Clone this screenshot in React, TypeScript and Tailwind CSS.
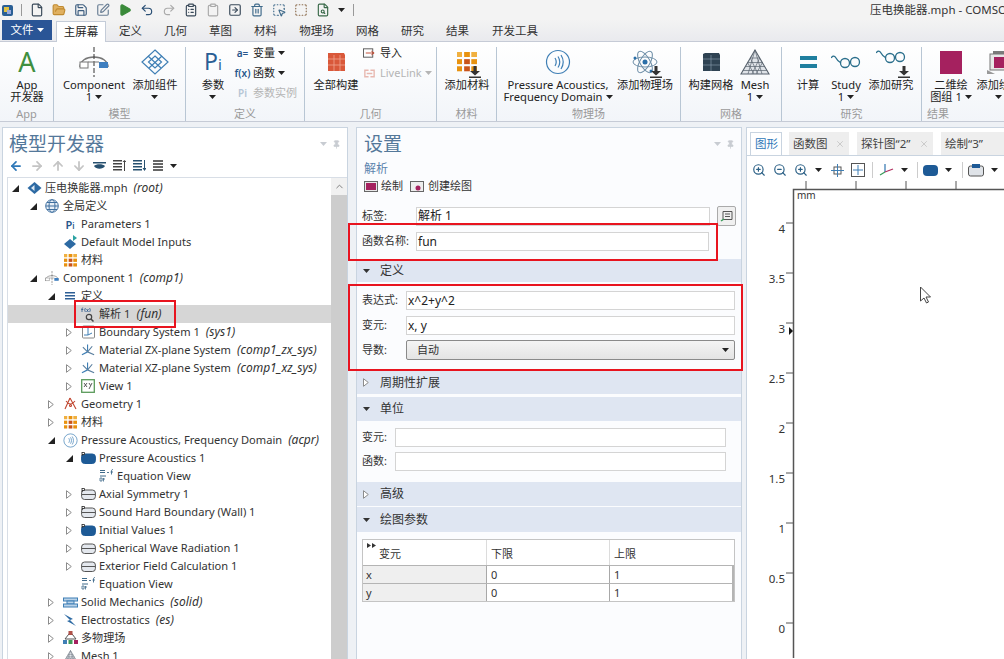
import React from "react";
import { File, FolderOpen, Save, SquarePen, Play, Undo2, Redo2, ClipboardList, Clipboard, SquareArrowRight, Trash2, SquareDashedMousePointer, SquareDashed, FileSearch, ChevronUp, ArrowLeft, ArrowRight, ArrowUp, ArrowDown, ZoomIn, ZoomOut, Pin, X } from "lucide-react";

const Caret = ({ c = "#222" }: { c?: string }) => (
  <svg width="7" height="4" viewBox="0 0 7 4" className="inline-block shrink-0"><path d="M0 0h7L3.5 4z" fill={c} /></svg>
);

const AcousticIcon = ({ s = 26 }: { s?: number }) => (
  <svg width={s} height={s} viewBox="0 0 26 26" fill="none" stroke="#3f7fb5">
    <circle cx="13" cy="13" r="11.5" strokeWidth="1.2" />
    <path d="M10 9c1.6 2.6 1.6 5.4 0 8M13 7.5c2.2 3.4 2.2 7.6 0 11M16 6c2.8 4.4 2.8 9.600 0 14" strokeWidth="1.2" />
  </svg>
);
const MaterialIcon = ({ s = 14 }: { s?: number }) => (
  <svg width={s} height={s} viewBox="0 0 14 14">
    <g fill="#e8920f">
      <rect x="5" y="0" width="4" height="3.500" />
      <rect x="0" y="5" width="3.500" height="3.500" />
      <rect x="5" y="5" width="4" height="3.500" fill="#c9541a" />
      <rect x="10" y="5" width="4" height="3.500" />
      <rect x="0" y="10" width="3.500" height="3.500" />
      <rect x="5" y="10" width="4" height="3.500" fill="#c9541a" />
      <rect x="10" y="10" width="4" height="3.500" />
      <rect x="10" y="0" width="4" height="3.500" fill="#f0b040" />
      <rect x="0" y="0" width="3.500" height="3.500" fill="#f0b040" />
    </g>
  </svg>
);
const DownArrow = () => (
  <svg width="12" height="12" viewBox="0 0 12 12" className="absolute -bottom-[1px] -right-[4px]"><path d="M4.500 0h3v5H11L6 9.500 1 5h3.500zM0 10.500h12V12H0z" fill="#333" /></svg>
);
const ComponentIcon = ({ s = 30 }: { s?: number }) => (
  <svg width={s} height={s} viewBox="0 0 30 30" fill="none">
    <path d="M1 20c0-6 6-10 14-10s14 4 14 10" stroke="#777" strokeWidth="1.500" />
    <rect x="20" y="15" width="9" height="6" fill="#3f7fc0" />
    <rect x="1" y="15" width="8" height="6" fill="#fff" stroke="#777" />
    <path d="M15 0v30" stroke="#333" strokeWidth="1" strokeDasharray="5 2" />
    <path d="M9 15h11" stroke="#777" />
  </svg>
);
const AddCompIcon = () => (
  <svg width="28" height="26" viewBox="0 0 28 26" fill="none" stroke="#3f7fb5" strokeWidth="1.200">
    <path d="M14 1l13 12-13 12L1 13z" />
    <path d="M7 7l13 12M21 7L8 19M14 7l6.500 6-6.500 6-6.500-6z" />
  </svg>
);
const RedCube = () => (
  <svg width="20" height="20" viewBox="0 0 20 20"><path d="M2 1h16l1 2v16H2z" fill="#d9583a" /><path d="M2 7h17M2 13h17M8 3v16M14 3v16" stroke="#f1a58f" strokeWidth=".8" /></svg>
);
const DarkCube = () => (
  <svg width="20" height="20" viewBox="0 0 20 20"><path d="M2 2l2-1h14l1 2v16H2z" fill="#2f4353" /><path d="M2 7h17M2 13h17M10 3v16" stroke="#8fa3b3" strokeWidth=".6" /></svg>
);
const MeshIcon = () => (
  <svg width="30" height="26" viewBox="0 0 30 26" fill="#dfe3e8" stroke="#59636e" strokeWidth=".7">
    <path d="M15 1l14 24H1z" strokeWidth="1.100" />
    <path d="M10.300 9h9.400M7.500 13.500h15M5 17.500h20M2.800 21.500h24.400M15 1L8 25M15 1l7 24M10.300 9L18 25M19.700 9L12 25M7.500 13.500L14 25M22.500 13.500L16 25" />
  </svg>
);
const StudyIcon = ({ s = 1 }: { s?: number }) => (
  <svg width={30 * s} height={16 * s} viewBox="0 0 30 16" fill="none" stroke="#2b6f8c" strokeWidth="1.300">
    <path d="M0 4c2-3 4-2 5 0s3 4 5 5" />
    <circle cx="14" cy="9" r="4.500" />
    <circle cx="24" cy="8" r="4.500" />
    <path d="M18.500 8.500c1-.8 1-.8 1.500-.8" />
  </svg>
);
const AtomIcon = () => (
  <svg width="26" height="26" viewBox="0 0 26 26" fill="none" stroke="#6f8fa8" strokeWidth="1">
    <ellipse cx="13" cy="13" rx="12" ry="5" />
    <ellipse cx="13" cy="13" rx="12" ry="5" transform="rotate(60 13 13)" />
    <ellipse cx="13" cy="13" rx="12" ry="5" transform="rotate(120 13 13)" />
    <circle cx="13" cy="13" r="2.500" fill="#2b6fa8" stroke="none" />
    <circle cx="3" cy="9" r="1.500" fill="#2b6fa8" stroke="none" />
    <circle cx="19" cy="22" r="1.500" fill="#2b6fa8" stroke="none" />
  </svg>
);
const PlotGroupIcon = () => <div className="h-[23px] w-[22px] bg-[#a5215f]" />;
const AddPlotIcon = () => (
  <svg width="24" height="24" viewBox="0 0 24 24"><rect x="6" y="1" width="17" height="16" fill="#7b7b7b" /><rect x="3" y="4" width="17" height="16" fill="#e8e8e8" stroke="#777" /><rect x="7" y="7" width="11" height="11" fill="#a5215f" /><path d="M0 20l8 4H0z" fill="#999" /></svg>
);
const PiIcon = ({ big }: { big?: boolean }) =>
  big ? <span className="text-[23px] leading-[26px] text-[#2a5f95]">P<span className="text-[15px]">i</span></span> : <span className="text-[11px] font-semibold leading-none text-[#27568c]">P<span className="text-[8px]">i</span></span>;

const RibbonBtn = ({ w, icon, lines, caret, arrow, ml = 0 }: { w: number; icon: React.ReactNode; lines: string[]; caret?: boolean; arrow?: boolean; ml?: number }) => (
  <div className="flex shrink-0 flex-col items-center" style={{ width: w, marginLeft: ml }}>
    <div className="relative flex h-[30px] items-center justify-center">{icon}{arrow && <DownArrow />}</div>
    <div className="mt-[2px] whitespace-nowrap text-center text-[11.200px] leading-[12px] text-[#222]">
      {lines.map((l, i) => (
        <div key={i} className="flex h-[12px] items-center justify-center gap-[3px]">
          {l}
          {caret && i === lines.length - 1 && <Caret />}
        </div>
      ))}
    </div>
  </div>
);

const Group = ({ w, label, children }: { w: number; label: string; children: React.ReactNode }) => (
  <div className="flex shrink-0 flex-col border-r border-[#b8c6d4]" style={{ width: w }}>
    <div className="flex h-[61px] items-start">{children}</div>
    <div className="text-center text-[11px] leading-[14px] text-[#9a9a9a]">{label}</div>
  </div>
);

const SmallRow = ({ icon, text, gray, caret }: { icon: React.ReactNode; text: string; gray?: boolean; caret?: boolean }) => (
  <div className={`flex h-[20px] items-center gap-[4px] whitespace-nowrap text-[11px] ${gray ? "text-[#b5b5b5]" : "text-[#222]"}`}>
    <span className="flex w-[13px] justify-center">{icon}</span>
    <span className="flex items-center gap-[3px]">{text}{caret && <Caret c={gray ? "#b5b5b5" : "#222"} />}</span>
  </div>
);

const PanelHead = ({ title }: { title: string }) => (
  <div className="flex h-[29px] items-center justify-between pr-[6px] pt-[3px]">
    <span className="text-[19px] leading-[24px] text-[#54789a]">{title}</span>
    <span className="flex items-center gap-[5px]">
      <Caret c="#c8ccd2" />
      <Pin size={9} color="#c8ccd2" fill="#c8ccd2" />
    </span>
  </div>
);

const TreeTri = ({ open }: { open?: boolean }) =>
  open ? (
    <svg width="7" height="7" viewBox="0 0 7 7"><path d="M7 0v7H0z" fill="#222" /></svg>
  ) : (
    <svg width="6" height="9" viewBox="0 0 6 9"><path d="M.5.700L5.300 4.500.5 8.300z" fill="#fff" stroke="#8c8c8c" /></svg>
  );

const DomainIcon = ({ kind }: { kind: "solidP" | "lineP" | "line" }) => (
  <svg width="15" height="12" viewBox="0 0 15 12" fill="none">
    <rect x=".6" y="2" width="13.800" height="9.500" rx="3" fill={kind === "solidP" ? "#1d5a96" : "#e4e8ee"} stroke={kind === "solidP" ? "#1d5a96" : "#555"} />
    {kind !== "solidP" && <path d="M1 6.500h13" stroke="#555" />}
    {kind !== "line" && <path d="M1 0v4M1 .5h2.500v2H1" stroke="#222" strokeWidth=".8" fill="#fff" />}
  </svg>
);
const EqIcon = () => (
  <svg width="15" height="14" viewBox="0 0 15 14" fill="none" stroke="#3f6a8a" strokeWidth="1">
    <path d="M1 1.500h5M1 3.500h5M1 7h6" />
    <path d="M1 9h2v3H1zM4.500 9v3.500M3.500 10h2.500" strokeWidth=".8" />
    <path d="M8 3.500h2M12.500 5.500V2c0-1 .5-1.500 1.500-1.500M11.500 3h2.500" strokeWidth=".9" />
  </svg>
);
const SearchFx = () => (
  <svg width="15" height="15" viewBox="0 0 15 15" fill="none"><path d="M1 5V2c0-1 .5-1.200 1.200-1.200M.3 2.500h2M4.500 1c-1 1.200-1 3 0 4M5.500 2l2 3M7.500 2l-2 3M8.500 1c1 1.200 1 3 0 4" stroke="#27568c" strokeWidth=".8" /><circle cx="8" cy="10" r="2.700" stroke="#444" strokeWidth="1.200" /><path d="M10 12l2.500 2.500" stroke="#444" strokeWidth="1.500" /></svg>
);
const AxesIcon = () => (
  <svg width="16" height="14" viewBox="0 0 16 14" fill="none" strokeWidth="1.200"><path d="M7 1v8" stroke="#3f7fb5" /><path d="M7 9l-6 3" stroke="#3f7fb5" /><path d="M7 9l7 3M7 9l5-6M7 9L2 4" stroke="#5a7f9f" /></svg>
);

type Row = { l: number; open?: boolean; leaf?: boolean; icon: React.ReactNode; t: string; i?: string; sel?: boolean };
const rows: Row[] = [
  { l: 0, open: true, icon: <svg width="15" height="12" viewBox="0 0 15 12"><path d="M7.500 0l7 6-7 6-7-6z" fill="#2d6aa3" /><path d="M7.500 3L4 6l3.500 3" fill="#dce8f2" /></svg>, t: "压电换能器.mph", i: "(root)" },
  { l: 1, open: true, icon: <svg width="14" height="14" viewBox="0 0 14 14" fill="#e6eef6" stroke="#3f6f9f"><circle cx="7" cy="7" r="6.300" /><ellipse cx="7" cy="7" rx="3" ry="6.300" /><path d="M1 7h12M2 3.500h10M2 10.500h10" /></svg>, t: "全局定义" },
  { l: 2, leaf: true, icon: <PiIcon />, t: "Parameters 1" },
  { l: 2, leaf: true, icon: <svg width="15" height="14" viewBox="0 0 15 14"><path d="M1 9l6-5 6 5-6 5z" fill="#2d6aa3" /><path d="M10 0v6l4-3z" fill="#2ba3a3" /></svg>, t: "Default Model Inputs" },
  { l: 2, leaf: true, icon: <MaterialIcon s={13} />, t: "材料" },
  { l: 1, open: true, icon: <ComponentIcon s={14} />, t: "Component 1", i: "(comp1)" },
  { l: 2, open: true, icon: <svg width="10" height="8" viewBox="0 0 10 8" fill="#2d5f95"><rect width="10" height="1.500" /><rect y="3" width="10" height="1.500" /><rect y="6" width="10" height="1.500" /></svg>, t: "定义" },
  { l: 3, leaf: true, icon: <SearchFx />, t: "解析 1", i: "(fun)", sel: true },
  { l: 3, icon: <svg width="13" height="14" viewBox="0 0 13 14" fill="none"><rect x=".5" y="1" width="12" height="12" rx="1" stroke="#888" /><path d="M6 3v7H2M6 10l4-2" stroke="#3f7fb5" /></svg>, t: "Boundary System 1", i: "(sys1)" },
  { l: 3, icon: <AxesIcon />, t: "Material ZX-plane System", i: "(comp1_zx_sys)" },
  { l: 3, icon: <AxesIcon />, t: "Material XZ-plane System", i: "(comp1_xz_sys)" },
  { l: 3, icon: <svg width="14" height="14" viewBox="0 0 14 14" fill="none"><rect x=".7" y=".7" width="12.600" height="12.600" fill="#fff" stroke="#5a9a5a" strokeWidth="1.300" /><path d="M3 4l3 4M6 4L3 8M8 4l1.500 2.500M11 4L8 10" stroke="#333" strokeWidth=".8" /></svg>, t: "View 1" },
  { l: 2, icon: <svg width="15" height="15" viewBox="0 0 15 15" fill="none" stroke="#c0452f" strokeWidth="1.100"><path d="M7 1L2 12M7 1l6 11M3 4c3 4 6 4 9 0" /><circle cx="7.500" cy="8.500" r="1" /></svg>, t: "Geometry 1" },
  { l: 2, icon: <MaterialIcon s={13} />, t: "材料" },
  { l: 2, open: true, icon: <AcousticIcon s={15} />, t: "Pressure Acoustics, Frequency Domain", i: "(acpr)" },
  { l: 3, open: true, icon: <DomainIcon kind="solidP" />, t: "Pressure Acoustics 1" },
  { l: 4, leaf: true, icon: <EqIcon />, t: "Equation View" },
  { l: 3, icon: <DomainIcon kind="lineP" />, t: "Axial Symmetry 1" },
  { l: 3, icon: <DomainIcon kind="lineP" />, t: "Sound Hard Boundary (Wall) 1" },
  { l: 3, icon: <DomainIcon kind="solidP" />, t: "Initial Values 1" },
  { l: 3, icon: <DomainIcon kind="line" />, t: "Spherical Wave Radiation 1" },
  { l: 3, icon: <DomainIcon kind="line" />, t: "Exterior Field Calculation 1" },
  { l: 3, leaf: true, icon: <EqIcon />, t: "Equation View" },
  { l: 2, icon: <svg width="15" height="13" viewBox="0 0 15 13" fill="#b9d2e8" stroke="#3f7fb5"><rect x=".5" y="2" width="14" height="3" /><rect x="4" y="5" width="7" height="3" /><rect x=".5" y="8" width="14" height="3" /></svg>, t: "Solid Mechanics", i: "(solid)" },
  { l: 2, icon: <svg width="14" height="14" viewBox="0 0 14 14" fill="#2d6aa3"><path d="M1 1l9 5-3 1 6 6-9-5 3-1z" /></svg>, t: "Electrostatics", i: "(es)" },
  { l: 2, icon: <svg width="15" height="14" viewBox="0 0 15 14"><path d="M7.500 1L2 8h11z" fill="none" stroke="#555" /><rect x="5.500" y="0" width="4" height="4" fill="#b0524a" /><rect x="0" y="9" width="4" height="4" fill="#3f7fb5" /><rect x="5.500" y="9" width="4" height="4" fill="#3f9a5a" /><rect x="11" y="9" width="4" height="4" fill="#a5215f" /></svg>, t: "多物理场" },
  { l: 2, icon: <MeshIcon />, t: "Mesh 1" },
];

const TreeRow = ({ r }: { r: Row }) => (
  <div className={`flex h-[18px] shrink-0 items-center whitespace-nowrap text-[11.100px] text-[#333] ${r.sel ? "bg-[#d6d6d6]" : ""}`}>
    <span className="shrink-0" style={{ width: 18 * r.l + 2 }} />
    <span className="flex w-[10px] shrink-0 justify-center">{!r.leaf && <TreeTri open={r.open} />}</span>
    <span className="flex h-[16px] w-[23px] shrink-0 items-center justify-center overflow-hidden pl-[5px] [&>svg]:max-h-[15px] [&>svg]:max-w-[15px]">{r.icon}</span>
    <span className="ml-[2px]">{r.t}</span>
    {r.i && <span className="ml-[6px] text-[12px] italic">{r.i}</span>}
  </div>
);

const Section = ({ t, open, h = 24 }: { t: string; open?: boolean; h?: number }) => (
  <div className="mb-[1px] flex items-center bg-[#dfe6f2] pl-[6px] text-[12px] text-[#333]" style={{ height: h }}>
    <span className="flex w-[17px] items-center">{open ? <Caret c="#333" /> : <TreeTri />}</span>
    {t}
  </div>
);

const Field = ({ label, lw, value, right = 6, mb = 6 }: { label: string; lw: number; value?: string; right?: number; mb?: number }) => (
  <div className="flex items-center pl-[5px] text-[11px] text-[#333]" style={{ paddingRight: right, marginBottom: mb }}>
    <span className="shrink-0 whitespace-nowrap" style={{ width: lw }}>{label}</span>
    <div className="flex h-[19px] flex-1 items-center border border-[#d4d4d4] bg-white pl-[1px] text-[12px] text-[#222]">{value}</div>
  </div>
);

const PlotTable = () => {
  const cols = "grid grid-cols-[124px_123px_1fr]";
  return (
    <div className="ml-[5px] mr-[6px] border border-[#c4c4c4] text-[11px] text-[#333]">
      <div className={`${cols} h-[25px] bg-white`}>
        <div className="relative border-r border-[#dcdcdc] pl-[16px] pt-[6px]"><svg width="9" height="5" viewBox="0 0 9 5" className="absolute left-[4px] top-[3px]"><path d="M0 0l4 2.500L0 5zM5 0l4 2.500L5 5z" fill="#333" /></svg>变元</div>
        <div className="border-r border-[#dcdcdc] pl-[4px] pt-[6px]">下限</div>
        <div className="pl-[4px] pt-[6px]">上限</div>
      </div>
      {[["x", "0", "1"], ["y", "0", "1"]].map((r) => (
        <div key={r[0]} className={`${cols} h-[18px] border-t border-[#b4b4b4] leading-[17px]`}>
          <div className="border-r border-[#a8a8a8] bg-[#efefef] pl-[3px]">{r[0]}</div>
          <div className="border-r border-[#a8a8a8] bg-white pl-[4px]">{r[1]}</div>
          <div className="border-r-2 border-[#b4b4b4] bg-white pl-[4px]">{r[2]}</div>
        </div>
      ))}
    </div>
  );
};

const Tab = ({ t, w, active }: { t: string; w: number; active?: boolean }) => (
  <div className={`flex h-[23px] shrink-0 items-center justify-between whitespace-nowrap px-[4px] text-[11.500px] ${active ? "mr-[7px] border border-b-0 border-[#c9d4e0] bg-white text-[#2f78b8]" : "mr-[8px] bg-[#eeeeee] text-[#444]"}`} style={{ width: w }}>
    {t}
    {!active && <X size={10} color="#c4c4c4" />}
  </div>
);

const Plot = () => {
  const yl = [["4", 224], ["3.5", 274], ["3", 324], ["2.5", 374], ["2", 424], ["1.5", 474], ["1", 524], ["0.5", 574], ["0", 624]] as [string, number][];
  return (
    <svg width="258" height="477" viewBox="746 182 258 477" className="block" fontFamily="Noto Sans, sans-serif" fontSize="11.500">
      <path d="M792.500 659V190.500H1004" fill="none" stroke="#555" strokeWidth="1.500" />
      {[805, 855, 905, 955].map((x) => <line key={x} x1={x} x2={x} y1="182" y2="190" stroke="#555" />)}
      <text x="796" y="200" fontSize="10" fill="#333">mm</text>
      {yl.map(([t, y]) => (
        <g key={t}>
          <line x1="785" x2="792" y1={y} y2={y} stroke="#555" />
          <text x="784" y={y + 10} textAnchor="end" fill="#333">{t}</text>
        </g>
      ))}
      <path d="M788 328l4 4-4 4z" fill="#111" />
      <path d="M919.500 288v14l3.500-3 2.500 5 2-1-2.500-5h4.500z" fill="#fff" stroke="#444" />
    </svg>
  );
};

const tabs: [string, number][] = [["定义", 45], ["几何", 45], ["草图", 45], ["材料", 45], ["物理场", 57], ["网格", 45], ["研究", 45], ["结果", 45], ["开发工具", 70]];

export default function App() {
  const iconC = "#3a4a5a";
  return (
    <div className="relative flex h-[659px] w-[1004px] flex-col overflow-hidden bg-[#eef1f5] font-['Noto_Sans','Noto_Sans_CJK_SC',sans-serif]">
      {/* Title bar */}
      <div className="flex h-[20px] shrink-0 items-center bg-[#f3f3f3]">
        <div className="flex w-[870px] shrink-0 items-center gap-[8px] pl-[2px]">
          <svg width="11" height="11" viewBox="0 0 11 11"><rect width="11" height="11" rx="2" fill="#2a5f95" /><rect x="2" y="2" width="5" height="5" fill="#e0c040" /><rect x="5" y="5" width="4" height="4" fill="#9ad" /></svg>
          <span className="h-[12px] w-px bg-[#999]" />
          <File size={14} color={iconC} />
          <FolderOpen size={14} color="#c08a30" fill="#e0b060" />
          <Save size={14} color="#3f5f80" />
          <SquarePen size={14} color="#6a7f95" />
          <Play size={14} color="#3a8a3a" fill="#3a8a3a" />
          <Undo2 size={14} color="#2a4f75" />
          <Redo2 size={14} color="#aaaaaa" />
          <ClipboardList size={14} color={iconC} />
          <Clipboard size={14} color="#aaaaaa" />
          <SquareArrowRight size={14} color={iconC} />
          <Trash2 size={14} color="#3f6a8a" />
          <SquareDashedMousePointer size={14} color="#3f6a8a" />
          <SquareDashed size={14} color="#8a6a4a" />
          <FileSearch size={14} color="#3a6a4a" />
          <Caret />
          <span className="h-[12px] w-px bg-[#999]" />
        </div>
        <span className="whitespace-nowrap text-[11.500px] text-[#333]">压电换能器.mph - COMSOL Multiphysics</span>
      </div>

      {/* Tabs */}
      <div className="flex h-[21px] shrink-0 items-end bg-gradient-to-b from-[#f3f3f3] to-[#e9eaee] pl-[2px]">
        <div className="mb-[1px] flex h-[20px] w-[50px] items-center justify-center gap-[3px] bg-[#2a5596] text-[11.500px] text-white">文件<Caret c="#fff" /></div>
        <div className="z-10 ml-[4px] -mb-[1px] flex h-[21px] w-[50px] items-center justify-center border border-b-0 border-[#c4ccd8] bg-white text-[11.500px] text-[#222]">主屏幕</div>
        <div className="ml-[2px] flex">
          {tabs.map(([t, w]) => (
            <div key={t} className="flex h-[20px] items-center justify-center text-[11.500px] text-[#333]" style={{ width: w }}>{t}</div>
          ))}
        </div>
      </div>

      {/* Ribbon */}
      <div className="flex h-[81px] shrink-0 overflow-hidden border-y border-[#c6cbd6] bg-gradient-to-b from-white to-[#f2f5f9] pt-[5px]">
        <Group w={54} label="App">
          <RibbonBtn w={54} icon={<span className="text-[27px] leading-[28px] text-[#3f8f3f]">A</span>} lines={["App", "开发器"]} />
        </Group>
        <Group w={132} label="模型">
          <RibbonBtn w={70} ml={5} icon={<ComponentIcon />} lines={["Component", "1"]} caret />
          <RibbonBtn w={54} ml={-1} icon={<AddCompIcon />} lines={["添加组件", " "]} caret />
        </Group>
        <Group w={119} label="定义">
          <RibbonBtn w={36} ml={9} icon={<PiIcon big />} lines={["参数", " "]} caret />
          <div className="-mt-[4px] ml-[5px] flex flex-col">
            <SmallRow icon={<span className="text-[10px] font-semibold text-[#27568c]">a=</span>} text="变量" caret />
            <SmallRow icon={<span className="text-[10px] font-semibold text-[#27568c]">f(x)</span>} text="函数" caret />
            <SmallRow icon={<span className="text-[10px] font-semibold text-[#b5c5d5]">Pi</span>} text="参数实例" gray />
          </div>
        </Group>
        <Group w={132} label="几何">
          <RibbonBtn w={48} ml={7} icon={<RedCube />} lines={["全部构建"]} />
          <div className="-mt-[4px] ml-[3px] flex flex-col">
            <SmallRow icon={<svg width="14" height="12" viewBox="0 0 14 12" fill="none" stroke="#555"><rect x=".5" y="1.500" width="10" height="9" /><path d="M3 6h8M9 4l3 2-3 2" stroke="#c0452f" /></svg>} text="导入" />
            <SmallRow icon={<svg width="14" height="11" viewBox="0 0 14 11" fill="none" stroke="#e8b8b0" strokeWidth="1.500"><path d="M6 2H2v7h4M8 2h4v7H8M4 5.500h6" /></svg>} text="LiveLink" gray caret />
          </div>
        </Group>
        <Group w={60} label="材料">
          <RibbonBtn w={58} ml={1} icon={<MaterialIcon s={20} />} lines={["添加材料"]} arrow />
        </Group>
        <Group w={184} label="物理场">
          <RibbonBtn w={106} ml={8} icon={<AcousticIcon />} lines={["Pressure Acoustics,", "Frequency Domain"]} caret />
          <RibbonBtn w={60} ml={4} icon={<AtomIcon />} lines={["添加物理场"]} arrow />
        </Group>
        <Group w={101} label="网格">
          <RibbonBtn w={50} ml={5} icon={<DarkCube />} lines={["构建网格"]} />
          <RibbonBtn w={38} icon={<MeshIcon />} lines={["Mesh", "1"]} caret />
        </Group>
        <Group w={140} label="研究">
          <RibbonBtn w={30} ml={11} icon={<svg width="17" height="12" viewBox="0 0 17 12" fill="#1f7f9f"><rect width="17" height="4" /><rect y="8" width="17" height="4" /></svg>} lines={["计算"]} />
          <RibbonBtn w={34} ml={6} icon={<StudyIcon />} lines={["Study", "1"]} caret />
          <RibbonBtn w={50} ml={3} icon={<div className="-mt-[10px]"><StudyIcon /></div>} lines={["添加研究"]} arrow />
        </Group>
        <div className="flex min-w-0 flex-1 flex-col">
          <div className="flex h-[61px]">
            <RibbonBtn w={48} ml={5} icon={<PlotGroupIcon />} lines={["二维绘", "图组 1"]} caret />
            <RibbonBtn w={48} ml={0} icon={<AddPlotIcon />} lines={["添加绘图", " "]} caret />
          </div>
          <div className="pr-[50px] text-center text-[11px] leading-[14px] text-[#9a9a9a]">结果</div>
        </div>
      </div>

      {/* Main panels */}
      <div className="flex min-h-0 flex-1 pt-[5px] pl-[2px]">
        {/* Model builder */}
        <div className="flex w-[346px] shrink-0 flex-col overflow-hidden border border-b-0 border-[#c9d4e0] bg-white">
          <div className="pl-[6px]"><PanelHead title="模型开发器" /></div>
          <div className="flex h-[20px] shrink-0 items-center gap-[7px] bg-white pb-[3px] pl-[6px]">
            <ArrowLeft size={14} color="#2f78b8" strokeWidth={3} />
            <ArrowRight size={14} color="#c4c4c4" strokeWidth={3} />
            <ArrowUp size={14} color="#c4c4c4" strokeWidth={3} />
            <ArrowDown size={14} color="#c4c4c4" strokeWidth={3} />
            <svg width="13" height="9" viewBox="0 0 13 9"><path d="M0 1h13v1.500H0zM1 5c2-2.500 9-2.500 11 0-2 3.500-9 3.500-11 0z" fill="#27506f" /></svg>
            <svg width="13" height="11" viewBox="0 0 13 11" fill="#444"><path d="M0 0h9v1.500H0zM0 3h9v1.500H0zM0 6h9v1.500H0zM0 9h9v1.500H0zM11 2v9h1V2h1.500L11.500 0 9.500 2z" /></svg>
            <svg width="13" height="11" viewBox="0 0 13 11" fill="#27506f"><path d="M0 0h9v1.500H0zM0 3h9v1.500H0zM0 6h9v1.500H0zM0 9h9v1.500H0zM11 0v8h-1.500l2 3 2-3H12V0z" /></svg>
            <svg width="10" height="11" viewBox="0 0 10 11" fill="#666"><path d="M0 0h10v2H0zM0 3h10v2H0zM0 6h10v2H0zM0 9h10v2H0z" /></svg>
            <Caret />
          </div>
          <div className="flex min-h-0 flex-1 pl-[4px]">
            <div className="flex min-w-0 flex-1 flex-col overflow-hidden border-l border-t border-[#d8dee6] pt-[1px]">
              {rows.map((r, i) => <TreeRow key={i} r={r} />)}
            </div>
            <div className="w-[16px] shrink-0 border-t border-[#d8dee6] bg-[#cdcdcd]">
              <div className="flex h-[17px] items-center justify-center bg-[#f1f1f1]"><ChevronUp size={11} color="#777" /></div>
            </div>
          </div>
        </div>

        {/* Settings */}
        <div className="ml-[8px] flex w-[386px] shrink-0 flex-col overflow-hidden border border-b-0 border-[#c9d4e0] bg-[#fbfcfe]">
          <div className="pl-[7px]"><PanelHead title="设置" /></div>
          <div className="mt-[4px] pl-[7px] text-[12px] leading-[16px] text-[#5b83ad]">解析</div>
          <div className="flex h-[18px] items-center pl-[7px] text-[11px] text-[#333]">
            <svg width="14" height="11" viewBox="0 0 14 11" className="mr-[3px]"><rect x=".5" y=".5" width="13" height="10" fill="#e8e8e8" stroke="#666" /><rect x="2" y="2" width="10" height="7" fill="#a5215f" /></svg>绘制
            <svg width="14" height="11" viewBox="0 0 14 11" className="ml-[7px] mr-[4px]"><rect x=".5" y=".5" width="13" height="10" fill="#eee" stroke="#666" /><circle cx="8" cy="7" r="2.500" fill="#a5215f" /></svg>创建绘图
          </div>
          <div className="mt-[11px] flex items-center pr-[5px]">
            <div className="flex-1"><Field label="标签:" lw={54} value="解析 1" right={7} mb={0} /></div>
            <div className="flex h-[20px] w-[19px] items-center justify-center rounded-[2px] border border-[#aaa] bg-[#f0f0f0]">
              <svg width="13" height="12" viewBox="0 0 13 12" fill="none" stroke="#555"><path d="M3 1.500h9v8H3zM5 4h5M5 6.500h5" /><path d="M1 11l3-2" stroke="#3a9a5a" strokeWidth="1.500" /></svg>
            </div>
          </div>
          <div className="mt-[6px]"><Field label="函数名称:" lw={54} value="fun" right={32} mb={8} /></div>
          <Section t="定义" open h={23} />
          <div className="h-[8px]" />
          <Field label="表达式:" lw={44} value="x^2+y^2" />
          <Field label="变元:" lw={44} value="x, y" mb={5} />
          <div className="mb-[11px] flex items-center pl-[5px] pr-[6px] text-[11px] text-[#333]">
            <span className="w-[44px] shrink-0">导数:</span>
            <div className="flex h-[20px] flex-1 items-center justify-between rounded-[2px] border border-[#8a8a8a] bg-gradient-to-b from-[#f4f4f4] to-[#e4e4e4] pl-[10px] pr-[5px]">自动<Caret /></div>
          </div>
          <Section t="周期性扩展" h={23} />
          <div className="h-[2px]" />
          <Section t="单位" open />
          <div className="h-[6px]" />
          <Field label="变元:" lw={33} right={15} mb={5} />
          <Field label="函数:" lw={33} right={15} mb={11} />
          <Section t="高级" />
          <Section t="绘图参数" open h={25} />
          <div className="h-[6px]" />
          <PlotTable />
        </div>

        {/* Graphics */}
        <div className="ml-[4px] flex min-w-0 flex-1 flex-col overflow-hidden border-l border-t border-[#c9d4e0] bg-white">
          <div className="flex h-[28px] shrink-0 items-end overflow-hidden border-b border-[#c9d4e0] pl-[3px]">
            <Tab t="图形" w={32} active />
            <Tab t="函数图" w={60} />
            <Tab t={"探针图“2”"} w={76} />
            <Tab t={"绘制“3”"} w={76} />
          </div>
          <div className="flex h-[25px] shrink-0 items-center gap-[7px] overflow-hidden pl-[5px] pt-[3px]">
            <ZoomIn size={14} color="#2a5f85" />
            <ZoomOut size={14} color="#2a5f85" />
            <ZoomIn size={14} color="#2a5f85" />
            <Caret />
            <svg width="13" height="13" viewBox="0 0 13 13" fill="none" stroke="#555" className="ml-[2px]"><rect x="3" y="3" width="7" height="7" /><path d="M6.500 0v13M0 6.500h13" stroke="#3f7fb5" /></svg>
            <svg width="14" height="14" viewBox="0 0 14 14" fill="none" stroke="#555"><rect x=".5" y=".5" width="13" height="13" /><path d="M7 2v10M2 7h10" stroke="#3f7fb5" /></svg>
            <span className="h-[16px] w-px bg-[#ccc]" />
            <svg width="16" height="14" viewBox="0 0 16 14" fill="none" strokeWidth="1.300" className="-ml-[2px]"><path d="M7 1v8" stroke="#3f7fb5" /><path d="M7 9l8-3" stroke="#b0305f" /><path d="M7 9l-5 3" stroke="#3a9a5a" /></svg>
            <Caret />
            <span className="ml-[2px] h-[16px] w-px bg-[#ccc]" />
            <div className="-ml-[2px] h-[11px] w-[15px] rounded-[4px] bg-[#1d5a96]" />
            <Caret />
            <span className="ml-[3px] h-[16px] w-px bg-[#ccc]" />
            <svg width="16" height="14" viewBox="0 0 16 14" fill="#dfe3e8" stroke="#555" className="-ml-[2px]"><rect x=".5" y="3" width="15" height="10" rx="2" /><rect x="4" y="1" width="8" height="4" fill="#1d5a96" stroke="none" /></svg>
            <Caret />
          </div>
          <Plot />
        </div>
      </div>

      {/* Annotation boxes laid over the screenshot */}
      <div className="pointer-events-none absolute left-[74px] top-[300px] h-[28px] w-[102px] border-2 border-[#e8141f]" />
      <div className="pointer-events-none absolute left-[348px] top-[223px] h-[38px] w-[370px] border-2 border-[#e8141f]" />
      <div className="pointer-events-none absolute left-[348px] top-[284px] h-[87px] w-[395px] border-2 border-[#e8141f]" />
    </div>
  );
}
